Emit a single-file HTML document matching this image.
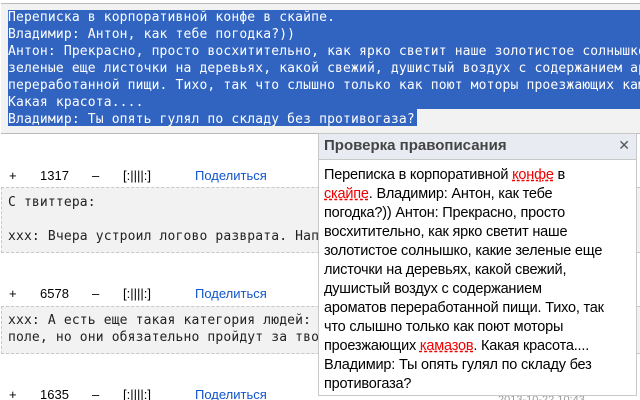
<!DOCTYPE html>
<html><head><meta charset="utf-8"><style>
body{margin:0;width:640px;height:400px;overflow:hidden;background:#fff;position:relative;font-family:"Liberation Sans","DejaVu Sans",sans-serif}
.clip{position:absolute;left:0;top:0;width:640px;height:400px;overflow:hidden}
.m{font-family:"DejaVu Sans Mono","Liberation Mono",monospace;font-size:13px;letter-spacing:0.15px;white-space:pre;position:absolute;left:8px;right:0;overflow:hidden}
.box{position:absolute;left:1px;right:0;background:#f2f2f2;border:1px dashed #c8c8c8;border-right:none}
.sel{position:absolute;background:#3163c0}
.w{color:#fff}
.row{position:absolute;left:0;font-size:13px;color:#000;height:16px}
.row span{position:absolute;white-space:nowrap}
.lnk{color:#1155cc}
.pop{position:absolute;left:318px;top:133px;width:319px;height:263px;background:#fff;border:1px solid #c8c8c8;box-sizing:border-box}
.hd{height:25px;background:#e8ecf2;border-bottom:1px solid #c8c8c8;font-weight:bold;font-size:15px;color:#444;line-height:23px;padding-left:5px;position:relative}
.x{position:absolute;right:6px;top:0;font-weight:normal;color:#555;font-size:14px}
.bd{padding:6px 0 0 5px;font-size:14.5px;line-height:19px;color:#000;white-space:nowrap;letter-spacing:-0.2px;overflow:hidden}
.r{color:#e00;text-decoration:underline dashed #e00}
</style></head><body><div class="clip">
<div class="box" style="top:3px;height:129px;border-style:solid;border-color:#bbb;border-width:1px 0 1px 0"></div>
<div class="sel" style="left:8px;top:10px;width:632px;height:99px"></div>
<div class="sel" style="left:8px;top:109px;width:409px;height:17px"></div>
<div class="m w" style="top:9px;line-height:17px">Переписка в корпоративной конфе в скайпе.
Владимир: Антон, как тебе погодка?))
Антон: Прекрасно, просто восхитительно, как ярко светит наше золотистое солнышко,
зеленые еще листочки на деревьях, какой свежий, душистый воздух с содержанием ароматов
переработанной пищи. Тихо, так что слышно только как поют моторы проезжающих камазов.
Какая красота....
Владимир: Ты опять гулял по складу без противогаза?</div>

<div class="row" style="top:168px"><span style="left:9px">+</span><span style="left:40px">1317</span><span style="left:92px">–</span><span style="left:123px">[:||||:]</span><span class="lnk" style="left:195px">Поделиться</span></div>
<div class="box" style="top:187px;height:64px"></div>
<div class="m" style="top:194px;line-height:17px;color:#222">С твиттера:

xxx: Вчера устроил логово разврата. Написал на двери</div>

<div class="row" style="top:286px"><span style="left:9px">+</span><span style="left:40px">6578</span><span style="left:92px">–</span><span style="left:123px">[:||||:]</span><span class="lnk" style="left:195px">Поделиться</span></div>
<div class="box" style="top:306px;height:46px"></div>
<div class="m" style="top:312px;line-height:17px;color:#222">xxx: А есть еще такая категория людей: они видят
поле, но они обязательно пройдут за твоей</div>

<div class="row" style="top:387px"><span style="left:9px">+</span><span style="left:40px">1635</span><span style="left:92px">–</span><span style="left:123px">[:||||:]</span><span class="lnk" style="left:195px">Поделиться</span><span style="left:498px;color:#999;font-size:11px;top:7px">2013-10-22 10:43</span></div>

<div class="pop"><div class="hd">Проверка правописания<span class="x">✕</span></div>
<div class="bd">Переписка в корпоративной <span class="r">конфе</span> в<br><span class="r">скайпе</span>. Владимир: Антон, как тебе<br>погодка?)) Антон: Прекрасно, просто<br>восхитительно, как ярко светит наше<br>золотистое солнышко, какие зеленые еще<br>листочки на деревьях, какой свежий,<br>душистый воздух с содержанием<br>ароматов переработанной пищи. Тихо, так<br>что слышно только как поют моторы<br>проезжающих <span class="r">камазов</span>. Какая красота....<br>Владимир: Ты опять гулял по складу без<br>противогаза?</div></div>
</div></body></html>
